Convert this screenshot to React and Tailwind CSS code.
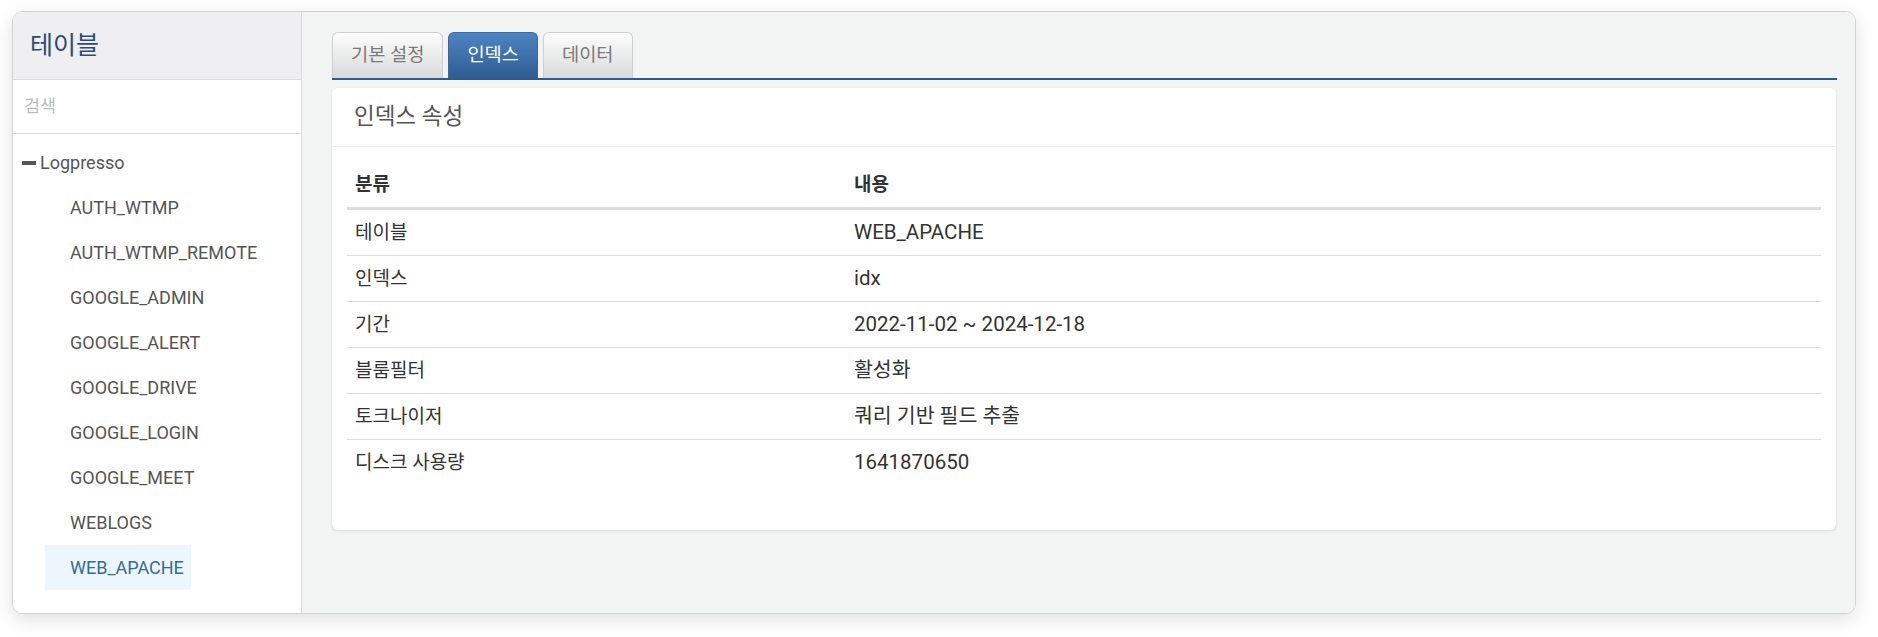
import { useState } from "react";

const FONT = "font-['Roboto','Noto_Sans_CJK_KR',sans-serif]";

const tables = [
  "AUTH_WTMP",
  "AUTH_WTMP_REMOTE",
  "GOOGLE_ADMIN",
  "GOOGLE_ALERT",
  "GOOGLE_DRIVE",
  "GOOGLE_LOGIN",
  "GOOGLE_MEET",
  "WEBLOGS",
  "WEB_APACHE",
];

const props = [
  ["테이블", "WEB_APACHE"],
  ["인덱스", "idx"],
  ["기간", "2022-11-02 ~ 2024-12-18"],
  ["블룸필터", "활성화"],
  ["토크나이저", "쿼리 기반 필드 추출"],
  ["디스크 사용량", "1641870650"],
];

const tabs = ["기본 설정", "인덱스", "데이터"];

function Sidebar({ selected, onSelect }) {
  return (
    <div className="flex w-[289px] shrink-0 flex-col border-r border-[#dcdcdc] bg-white">
      <div className="flex h-[68px] items-center border-b border-[#dcdcdc] bg-[#efeff1] pl-[17px] text-[25px] text-[#2b4c74]">
        테이블
      </div>
      <div className="flex h-[54px] items-center border-b border-[#dcdcdc] pl-[11px] text-[17.5px] text-[#bbbbbb]">
        검색
      </div>
      <div className="pt-[6px]">
        <div className="flex h-[45px] items-center pl-[9px] text-[18px] text-[#555]">
          <span className="mr-[4px] inline-block h-[4px] w-[14px] bg-[#555]" />
          Logpresso
        </div>
        {tables.map((t) => (
          <div key={t} className="pl-[32px]">
            <button
              onClick={() => onSelect(t)}
              className={`flex h-[45px] items-center pl-[25px] pr-[7px] text-[18px] ${
                selected === t ? "bg-[#eef6fd] text-[#2f6d9c]" : "text-[#555]"
              }`}
            >
              {t}
            </button>
          </div>
        ))}
      </div>
    </div>
  );
}

export default function App() {
  const [selected, setSelected] = useState("WEB_APACHE");
  const [tab, setTab] = useState("인덱스");

  return (
    <div className={`h-[637px] w-[1878px] bg-white pl-[12px] pt-[11px] ${FONT}`}>
      <div className="flex h-[603px] w-[1844px] overflow-hidden rounded-[10px] border border-[#d3d3d3] shadow-[0_6px_18px_rgba(0,0,0,0.12)]">
        <Sidebar selected={selected} onSelect={setSelected} />

        <div className="flex-1 bg-[#f2f3f3] pl-[30px] pr-[18px] pt-[20px]">
          <div className="flex items-end gap-[5px] border-b-2 border-[#30598c]">
            {tabs.map((t) => (
              <button
                key={t}
                onClick={() => setTab(t)}
                className={`h-[46px] rounded-t-[6px] border border-b-0 px-[18px] text-[18.7px] ${
                  tab === t
                    ? "border-[#3a67a0] bg-gradient-to-b from-[#4e84c2] to-[#2f5d94] text-white"
                    : "border-[#cfcfcf] bg-gradient-to-b from-[#fdfdfd] to-[#d9dadb] text-[#7a7a7a]"
                }`}
              >
                {t}
              </button>
            ))}
          </div>

          <div className="mt-[8px] mr-[1px] rounded-[6px] bg-white shadow-[0_1px_3px_rgba(0,0,0,0.1)]">
            <div className="flex h-[59px] items-center border-b border-[#ececec] pl-[22px] text-[22.5px] text-[#555]">
              인덱스 속성
            </div>
            <div className="p-[15px] pb-[45px]">
              <table className="w-full border-collapse text-[20.5px] text-[#333]">
                <thead>
                  <tr>
                    <th className="w-[499px] border-b-[3px] border-[#dddddd] p-[8px] text-left text-[19px] font-bold leading-[29px]">
                      분류
                    </th>
                    <th className="border-b-[3px] border-[#dddddd] p-[8px] text-left text-[19px] font-bold leading-[29px]">
                      내용
                    </th>
                  </tr>
                </thead>
                <tbody>
                  {props.map(([k, v], i) => (
                    <tr key={k} className={i > 0 ? "border-t border-[#dddddd]" : ""}>
                      <td className="p-[8px] text-[19px] leading-[29px]">{k}</td>
                      <td className="p-[8px] leading-[29px]">{v}</td>
                    </tr>
                  ))}
                </tbody>
              </table>
            </div>
          </div>
        </div>
      </div>
    </div>
  );
}
